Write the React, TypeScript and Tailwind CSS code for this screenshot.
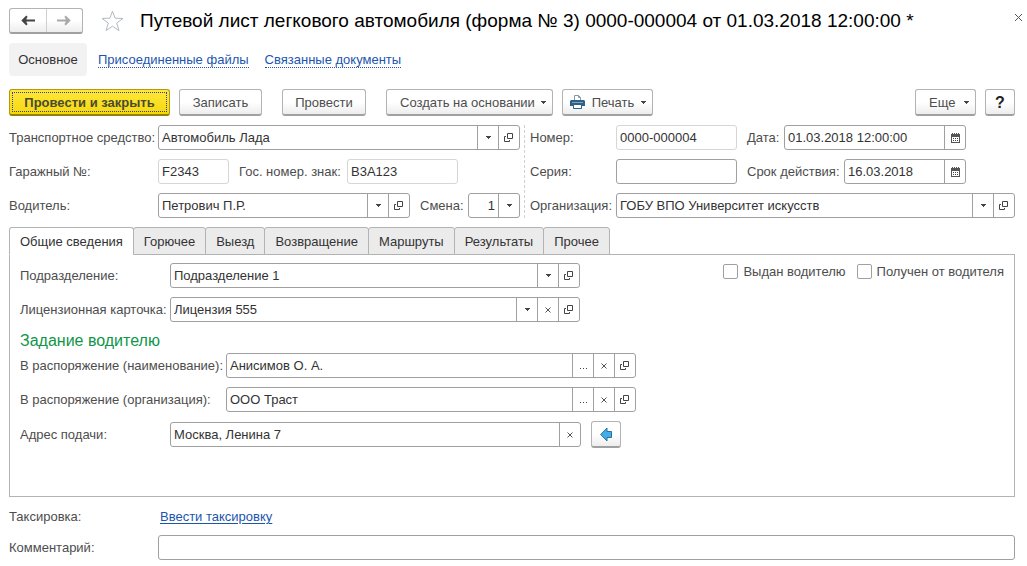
import React, { useState } from 'react';

const TABS = ['Общие сведения', 'Горючее', 'Выезд', 'Возвращение', 'Маршруты', 'Результаты', 'Прочее'];

type Action = 'drop' | 'more' | 'clear' | 'open' | 'calendar';

const ACTION_TITLES: Record<Action, string> = {
  drop: 'Выбрать из списка',
  more: 'Выбрать',
  clear: 'Очистить',
  open: 'Открыть',
  calendar: 'Календарь',
};

function Caret() {
  return (
    <svg width="5" height="3" viewBox="0 0 5 3" fill="#444" shapeRendering="crispEdges" className="shrink-0">
      <path d="M0 0h5v1H0zM1 1h3v1H1zM2 2h1v1H2z" />
    </svg>
  );
}

function ActionIcon({ action }: { action: Action }) {
  if (action === 'drop') return <Caret />;
  if (action === 'more') {
    return (
      <svg width="9" height="9" viewBox="0 0 9 9" fill="#444">
        <path d="M1 7h1v1H1zM4 7h1v1H4zM7 7h1v1H7z" />
      </svg>
    );
  }
  if (action === 'clear') {
    return (
      <svg width="6" height="6" viewBox="0 0 6 6" stroke="#555">
        <path d="M.5 .5 5.5 5.5M5.5 .5 .5 5.5" />
      </svg>
    );
  }
  if (action === 'open') {
    return (
      <svg width="10" height="10" viewBox="0 0 10 10" fill="none" stroke="#444">
        <path d="M3.5 .5h5v5h-5zM2 3.5H.5v5h5V7" />
      </svg>
    );
  }
  return (
    <svg width="9" height="10" viewBox="0 0 9 10" shapeRendering="crispEdges">
      <path d="M0 1h1V0h1v1h1V0h1v1h1V0h1v1h1V0h1v1h1v9H0z" fill="#555" />
      <path d="M1 4h7v5H1z" fill="#fff" />
      <path d="M2 5h1v1H2zM4 5h1v1H4zM6 5h1v1H6zM2 7h1v1H2zM4 7h1v1H4zM6 7h1v1H6z" fill="#444" />
    </svg>
  );
}

interface FieldProps {
  id: string;
  value?: string;
  actions?: Action[];
  readOnly?: boolean;
  alignRight?: boolean;
  className?: string;
}

function Field({ id, value = '', actions = [], readOnly, alignRight, className = '' }: FieldProps) {
  return (
    <div className={`flex h-[25px] min-w-0 overflow-hidden rounded-[3px] border bg-white ${readOnly ? 'border-[#d6d6d6]' : 'border-[#a0a0a0]'} ${className}`}>
      <input
        id={id}
        type="text"
        defaultValue={value}
        readOnly={readOnly}
        className={`w-0 min-w-0 flex-1 bg-transparent px-[3px] text-[#333] outline-none ${alignRight ? 'text-right' : ''}`}
      />
      {actions.map((action) => (
        <button
          key={action}
          type="button"
          aria-label={ACTION_TITLES[action]}
          className="flex w-[21px] shrink-0 items-center justify-center border-l border-[#a0a0a0]"
        >
          <ActionIcon action={action} />
        </button>
      ))}
    </div>
  );
}

function Label({ htmlFor, className = '', children }: { htmlFor: string; className?: string; children: React.ReactNode }) {
  return (
    <label htmlFor={htmlFor} className={`shrink-0 whitespace-nowrap ${className}`}>
      {children}
    </label>
  );
}

function Button({ className = 'justify-center', label, children }: { className?: string; label?: string; children: React.ReactNode }) {
  return (
    <button
      type="button"
      aria-label={label}
      className={`flex h-[27px] shrink-0 items-center whitespace-nowrap rounded-[3px] border border-b-2 border-[#b3b3b3] border-b-[#a0a0a0] bg-linear-to-b from-white from-50% to-[#ededed] ${className}`}
    >
      {children}
    </button>
  );
}

function Checkbox({ id, children }: { id: string; children: React.ReactNode }) {
  return (
    <div className="flex items-center gap-[5px]">
      <input id={id} type="checkbox" className="size-[15px] shrink-0 appearance-none rounded-[2px] border border-[#a0a0a0] bg-white checked:bg-[#666]" />
      <Label htmlFor={id}>{children}</Label>
    </div>
  );
}

function Header() {
  return (
    <header className="flex items-center">
      <div className="flex h-[26px] w-[74px] shrink-0 rounded-[3px] border border-b-2 border-[#b3b3b3] border-b-[#a0a0a0] bg-linear-to-b from-white from-50% to-[#ededed]">
        <button type="button" aria-label="Назад" className="flex flex-1 items-center justify-center border-r border-[#d0d0d0]">
          <svg width="14" height="11" viewBox="0 0 14 11" fill="none" stroke="#444" strokeWidth="2">
            <path d="M1.500 5.500H14M6 1.200 1.700 5.500 6 9.800" />
            <path d="M2 5.500 5.500 2.500V8.500Z" fill="#444" stroke="none" />
          </svg>
        </button>
        <button type="button" aria-label="Вперед" className="flex flex-1 items-center justify-center">
          <svg width="14" height="11" viewBox="0 0 14 11" fill="none" stroke="#aaa" strokeWidth="2">
            <path d="M0 5.500H12.500M8 1.200 12.300 5.500 8 9.800" />
            <path d="M12 5.500 8.500 2.500V8.500Z" fill="#aaa" stroke="none" />
          </svg>
        </button>
      </div>
      <button type="button" aria-label="Добавить в избранное" className="ml-[18px] shrink-0">
        <svg width="23" height="22" viewBox="0 0 23 22" fill="none" stroke="#b4bac0">
          <path d="M11.5 1.2 14.1 8.2 22 8.4 15.7 13.1 18 20.6 11.5 16.2 5 20.6 7.3 13.1 1 8.4 8.9 8.2Z" />
        </svg>
      </button>
      <h1 className="ml-4 flex-1 truncate text-[19px] leading-[26px] text-black">
        Путевой лист легкового автомобиля (форма № 3) 0000-000004 от 01.03.2018 12:00:00 *
      </h1>
      <button type="button" aria-label="Закрыть" className="-mr-2 mb-2 shrink-0">
        <svg width="9" height="9" viewBox="0 0 9 9" stroke="#555">
          <path d="M1 1 8 8M8 1 1 8" />
        </svg>
      </button>
    </header>
  );
}

function CommandBar() {
  return (
    <div className="mt-[13px] flex items-center">
      <button
        type="button"
        className="h-[27px] w-[161px] shrink-0 rounded-[3px] border border-b-2 border-[#b09a10] border-b-[#93800c] bg-linear-to-b from-[#ffe838] to-[#f5d800] p-[2px] font-bold text-[#4a4a30]"
      >
        <span className="flex h-full items-center justify-center whitespace-nowrap border border-dotted border-[#3a3a80]">Провести и закрыть</span>
      </button>
      <Button className="ml-[9px] w-[83px] justify-center">Записать</Button>
      <Button className="ml-5 w-[84px] justify-center">Провести</Button>
      <Button className="ml-5 w-[167px] justify-between pr-[6px] pl-[13px]">
        Создать на основании <Caret />
      </Button>
      <Button className="ml-[9px] w-[91px] justify-between pr-[6px] pl-[7px]">
        <svg width="15" height="14" viewBox="0 0 15 14">
          <path d="M4.500 6V.5h4l2 2V6" fill="#fff" stroke="#7d9bb0" />
          <path d="M8.500 .5v2h2" fill="none" stroke="#7d9bb0" />
          <path d="M1 5h13l1 1v5H0V6Z" fill="#2f5f85" />
          <path d="M2 7h11v1H2z" fill="#7fa3bd" />
          <path d="M3.500 9.500h8v4h-8z" fill="#fff" stroke="#2f5f85" />
        </svg>
        Печать <Caret />
      </Button>
      <Button className="ml-auto w-[61px] justify-between pr-[6px] pl-[13px]">
        Еще <Caret />
      </Button>
      <Button className="ml-[9px] w-[30px] justify-center text-[16px] font-bold text-[#222]">?</Button>
    </div>
  );
}

function DocumentFields() {
  return (
    <div className="mt-[9px] grid grid-cols-[511fr_491fr] gap-1">
      <div className="flex min-w-0 flex-col gap-[9px]">
        <div className="flex items-center">
          <Label htmlFor="vehicle" className="w-[149px]">Транспортное средство:</Label>
          <Field id="vehicle" value="Автомобиль Лада" actions={['drop', 'open']} className="flex-1" />
        </div>
        <div className="flex items-center">
          <Label htmlFor="garage" className="w-[149px]">Гаражный №:</Label>
          <Field id="garage" value="F2343" readOnly className="w-[71px]" />
          <Label htmlFor="plate" className="ml-[10px] w-[108px]">Гос. номер. знак:</Label>
          <Field id="plate" value="В3А123" readOnly className="w-[111px]" />
        </div>
        <div className="flex items-center">
          <Label htmlFor="driver" className="w-[149px]">Водитель:</Label>
          <Field id="driver" value="Петрович П.Р." actions={['drop', 'open']} className="flex-1" />
          <Label htmlFor="shift" className="ml-[10px] w-12">Смена:</Label>
          <Field id="shift" value="1" actions={['drop']} alignRight className="w-[52px]" />
        </div>
      </div>
      <div className="flex min-w-0 flex-col gap-[9px] border-l border-dashed border-[#d0d0d0] pl-[5px]">
        <div className="flex items-center">
          <Label htmlFor="number" className="w-[86px]">Номер:</Label>
          <Field id="number" value="0000-000004" readOnly className="w-[121px]" />
          <Label htmlFor="date" className="ml-[10px] w-[37px]">Дата:</Label>
          <Field id="date" value="01.03.2018 12:00:00" actions={['calendar']} className="w-[182px]" />
        </div>
        <div className="flex items-center">
          <Label htmlFor="series" className="w-[86px]">Серия:</Label>
          <Field id="series" className="w-[121px]" />
          <Label htmlFor="valid" className="ml-[10px] w-[97px]">Срок действия:</Label>
          <Field id="valid" value="16.03.2018" actions={['calendar']} className="w-[122px]" />
        </div>
        <div className="flex items-center">
          <Label htmlFor="org" className="w-[86px]">Организация:</Label>
          <Field id="org" value="ГОБУ ВПО Университет искусств" actions={['drop', 'open']} className="flex-1" />
        </div>
      </div>
    </div>
  );
}

function GeneralPanel() {
  return (
    <div role="tabpanel" className="flex min-h-[242px] items-start border border-t-0 border-[#b3b3b3] px-[10px] pt-2">
      <div className="flex min-w-0 flex-1 flex-col">
        <div className="flex items-center">
          <Label htmlFor="department" className="w-[150px]">Подразделение:</Label>
          <Field id="department" value="Подразделение 1" actions={['drop', 'open']} className="max-w-[410px] flex-1" />
        </div>
        <div className="mt-[9px] flex items-center">
          <Label htmlFor="license" className="w-[150px]">Лицензионная карточка:</Label>
          <Field id="license" value="Лицензия 555" actions={['drop', 'clear', 'open']} className="max-w-[410px] flex-1" />
        </div>
        <h2 className="mt-[9px] text-[16px] leading-[20px] text-[#0f9648]">Задание водителю</h2>
        <div className="mt-[2px] flex items-center">
          <Label htmlFor="assigned-name" className="w-[206px]">В распоряжение (наименование):</Label>
          <Field id="assigned-name" value="Анисимов О. А." actions={['more', 'clear', 'open']} className="max-w-[410px] flex-1" />
        </div>
        <div className="mt-[9px] flex items-center">
          <Label htmlFor="assigned-org" className="w-[206px]">В распоряжение (организация):</Label>
          <Field id="assigned-org" value="ООО Траст" actions={['more', 'clear', 'open']} className="max-w-[410px] flex-1" />
        </div>
        <div className="mt-[9px] flex items-center">
          <Label htmlFor="address" className="w-[150px]">Адрес подачи:</Label>
          <Field id="address" value="Москва, Ленина 7" actions={['clear']} className="max-w-[411px] flex-1" />
          <Button label="Заполнить адрес" className="ml-[10px] w-[30px] justify-center">
            <svg width="13" height="15" viewBox="0 0 13 15">
              <path d="M.7 7.500 7 1V4.500H11.500V10.500H7V14Z" fill="#41aeea" stroke="#2a6f9e" />
            </svg>
          </Button>
        </div>
      </div>
      <div className="flex shrink-0 gap-[11px]">
        <Checkbox id="issued">Выдан водителю</Checkbox>
        <Checkbox id="received">Получен от водителя</Checkbox>
      </div>
    </div>
  );
}

export default function App() {
  const [tab, setTab] = useState(TABS[0]);

  return (
    <main className="bg-white px-[9px] pt-2 pr-3 pb-[6px] font-['Liberation_Sans',Arial,sans-serif] text-[13px] leading-[17px] text-[#4d4d4d]">
      <Header />

      <nav className="mt-[9px] flex items-center">
        <a href="#main" className="flex h-[33px] w-[78px] items-center justify-center rounded-[4px] bg-[#f2f2f2] text-[#333]">Основное</a>
        <a href="#files" className="mt-[2px] ml-[11px] border-b border-dotted border-[#1c55ae] leading-[14px] text-[#1c55ae]">Присоединенные файлы</a>
        <a href="#related" className="mt-[2px] ml-4 border-b border-dotted border-[#1c55ae] leading-[14px] text-[#1c55ae]">Связанные документы</a>
      </nav>

      <CommandBar />
      <DocumentFields />

      <div role="tablist" className="mt-[9px] flex">
        {TABS.map((name) => (
          <button
            key={name}
            type="button"
            role="tab"
            aria-selected={tab === name}
            onClick={() => setTab(name)}
            className={`-mr-px h-7 shrink-0 whitespace-nowrap rounded-t-[3px] border border-[#b3b3b3] px-[10px] text-[#333] ${tab === name ? 'border-b-white bg-white' : 'bg-[#ebebeb]'}`}
          >
            {name}
          </button>
        ))}
        <div className="flex-1 border-b border-[#b3b3b3]" />
      </div>
      <GeneralPanel />

      <div className="mt-[11px] flex items-center">
        <span className="w-[151px] shrink-0">Таксировка:</span>
        <a href="#rating" className="text-[#1c55ae] underline underline-offset-2">Ввести таксировку</a>
      </div>
      <div className="mt-[10px] flex items-center">
        <Label htmlFor="comment" className="w-[149px]">Комментарий:</Label>
        <Field id="comment" className="flex-1" />
      </div>
    </main>
  );
}
